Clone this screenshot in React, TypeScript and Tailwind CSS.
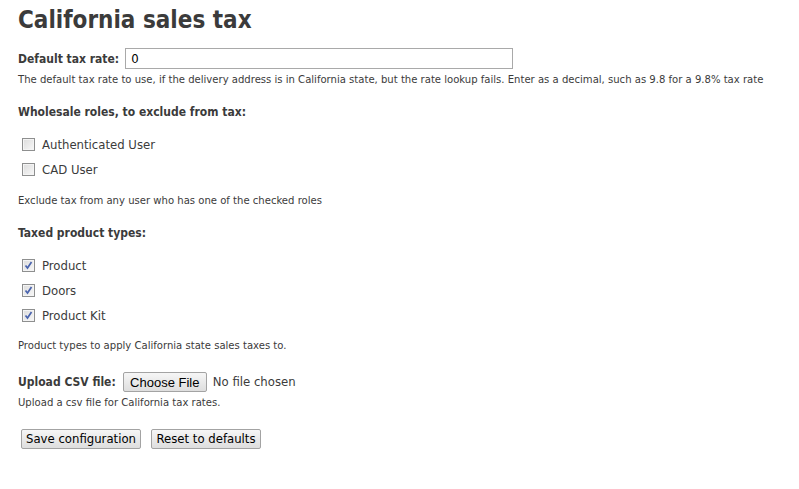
import React from 'react';

const font = { fontFamily: '"DejaVu Sans Condensed", Tahoma, "DejaVu Sans", sans-serif' };

const Box = ({ checked }: { checked?: boolean }) => (
  <span className="relative inline-block w-[13px] h-[13px] border border-[#8e8f8f] bg-gradient-to-br from-[#dcdcdc] to-[#f8f8f8] shadow-[inset_0_0_0_1px_#f4f4f4]">
    {checked && (
      <svg viewBox="0 0 13 13" className="absolute -left-px -top-px w-[13px] h-[13px]">
        <path d="M3.5 6.5 L5.5 9 L9.5 3" fill="none" stroke="#4a64ae" strokeWidth="1.7" />
      </svg>
    )}
  </span>
);

const Check = ({ label, checked }: { label: string; checked?: boolean }) => (
  <div className="flex items-center h-[25px] pl-1">
    <Box checked={checked} />
    <span className="ml-[7px] text-[13px]">{label}</span>
  </div>
);

const Btn = ({ children, className = '' }: { children: React.ReactNode; className?: string }) => (
  <button
    className={`h-5 whitespace-nowrap border border-[#a3a3a3] rounded-[2px] bg-gradient-to-b from-[#f6f6f6] to-[#dedede] text-[13px] leading-[18px] text-black ${className}`}
  >
    {children}
  </button>
);

export default function App() {
  return (
    <div className="bg-white min-h-screen pl-[18px] text-[#3b3b3b]" style={font}>
      <h1 className="h-10 leading-10 text-[24px] font-bold">California sales tax</h1>

      <div className="mt-2 flex items-center h-[21px]">
        <label className="text-[12px] font-bold">Default tax rate:</label>
        <div className="ml-[6px] w-[388px] h-[21px] border border-[#a9a9a9] px-[5px] text-[13px] leading-[19px] text-black">
          0
        </div>
      </div>
      <p className="mt-1 h-[14px] leading-[14px] text-[11.2px] whitespace-nowrap">
        The default tax rate to use, if the delivery address is in California state, but the rate lookup fails. Enter as a decimal, such as 9.8 for a 9.8% tax rate
      </p>

      <h2 className="mt-4 h-[18px] leading-[18px] text-[12px] font-bold">Wholesale roles, to exclude from tax:</h2>
      <div className="mt-[11px]">
        <Check label="Authenticated User" />
        <Check label="CAD User" />
      </div>
      <p className="mt-3 h-[14px] leading-[14px] text-[11.2px]">Exclude tax from any user who has one of the checked roles</p>

      <h2 className="mt-4 h-[18px] leading-[18px] text-[12px] font-bold">Taxed product types:</h2>
      <div className="mt-[11px]">
        <Check label="Product" checked />
        <Check label="Doors" checked />
        <Check label="Product Kit" checked />
      </div>
      <p className="mt-[11px] h-[14px] leading-[14px] text-[11.2px]">Product types to apply California state sales taxes to.</p>

      <div className="mt-[19px] flex items-center h-5">
        <label className="text-[12px] font-bold">Upload CSV file:</label>
        <button
          className="ml-[7px] h-5 w-[84px] whitespace-nowrap border border-[#a3a3a3] rounded-[2px] bg-gradient-to-b from-[#f6f6f6] to-[#dedede] text-[13px] text-black"
          style={{ fontFamily: '"Liberation Sans", Arial, sans-serif' }}
        >
          Choose File
        </button>
        <span className="ml-[6px] text-[13px]">No file chosen</span>
      </div>
      <p className="mt-1 h-[14px] leading-[14px] text-[11.2px]">Upload a csv file for California tax rates.</p>

      <div className="mt-[19px] flex gap-[10px] pl-[3px]">
        <Btn className="w-[120px]">Save configuration</Btn>
        <Btn className="w-[110px]">Reset to defaults</Btn>
      </div>
    </div>
  );
}
